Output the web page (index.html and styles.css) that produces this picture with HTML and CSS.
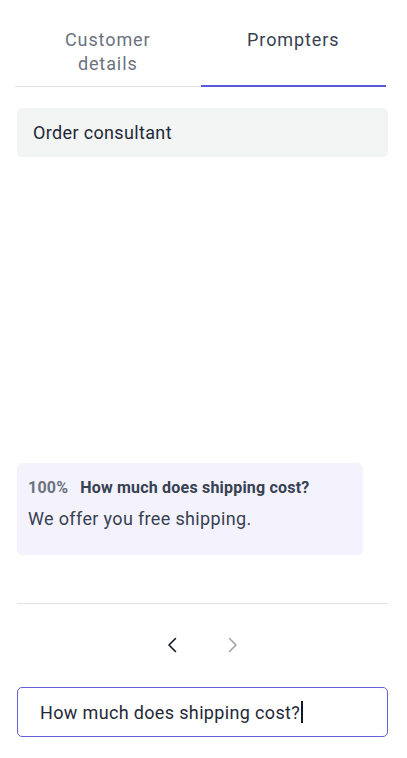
FILE: index.html
```html
<!DOCTYPE html>
<html lang="en">
<head>
<meta charset="utf-8">
<title>Prompters</title>
<link rel="stylesheet" href="styles.css">
</head>
<body>
<div class="app">
  <nav class="tabs">
    <div class="tab">Customer<br>details</div>
    <div class="tab active">Prompters</div>
  </nav>
  <div class="content">
    <div class="topic">Order consultant</div>
    <div class="card">
      <div class="card-head"><span class="score">100%</span><span class="question">How much does shipping cost?</span></div>
      <div class="answer">We offer you free shipping.</div>
    </div>
    <div class="divider"></div>
    <div class="pager">
      <span class="arrow">
        <svg width="24" height="24" viewBox="0 0 24 24"><path d="M15.5 5.5 9 12l6.5 6.5" fill="none" stroke="#111827" stroke-width="1.6" stroke-linecap="round" stroke-linejoin="round"/></svg>
      </span>
      <span class="arrow disabled">
        <svg width="24" height="24" viewBox="0 0 24 24"><path d="M8.5 5.5 15 12l-6.5 6.5" fill="none" stroke="#9ca3af" stroke-width="1.6" stroke-linecap="round" stroke-linejoin="round"/></svg>
      </span>
    </div>
    <div class="field"><span class="field-text">How much does shipping cost?</span><span class="caret"></span></div>
  </div>
</div>
</body>
</html>
```
FILE: styles.css
```css
* { box-sizing: border-box; }
html, body { margin: 0; padding: 0; background: #fff; }
body { font-family: Roboto, "Liberation Sans", sans-serif; }
.app { height: 758px; display: flex; flex-direction: column; padding: 0 21px 21px 15px; }
.tabs { display: flex; border-bottom: 1px solid #e2e2e2; }
.tab { flex: 1; text-align: center; font-size: 18px; line-height: 24px; color: #6b7280; padding: 28px 0 10px; letter-spacing: 0.9px; }
.tab.active { color: #374151; border-bottom: 2px solid #5b57db; margin-bottom: -1px; }
.content { flex: 1; display: flex; flex-direction: column; padding-left: 2px; margin-right: -2px; }
.topic { margin-top: 21px; height: 49px; background: #f3f4f4; border-radius: 5px; padding: 0 16px; display: flex; align-items: center; font-size: 18px; color: #1f2937; letter-spacing: 0.35px; }
.card { margin-top: auto; width: 346px; height: 92px; background: #f3f2fd; border-radius: 6px; padding: 16px 11px; }
.card-head { display: flex; align-items: center; gap: 12px; font-size: 16px; font-weight: 700; line-height: 18px; letter-spacing: 0.2px; }
.score { color: #6b7280; }
.question { color: #374151; }
.answer { margin-top: 10px; font-size: 18px; line-height: 24px; color: #374151; letter-spacing: 0.35px; }
.divider { margin-top: 48px; height: 1px; background: #e2e2e2; }
.pager { height: 83px; display: flex; justify-content: center; align-items: center; gap: 37px; padding-bottom: 2px; }
.arrow { display: flex; width: 24px; height: 24px; }
.field { height: 50px; border: 1px solid #6361d8; border-radius: 5px; padding: 0 22px; display: flex; align-items: center; font-size: 18px; color: #1f2937; letter-spacing: 0.35px; }
.caret { display: inline-block; width: 2px; height: 22px; background: #111827; margin-left: 1px; }
```
